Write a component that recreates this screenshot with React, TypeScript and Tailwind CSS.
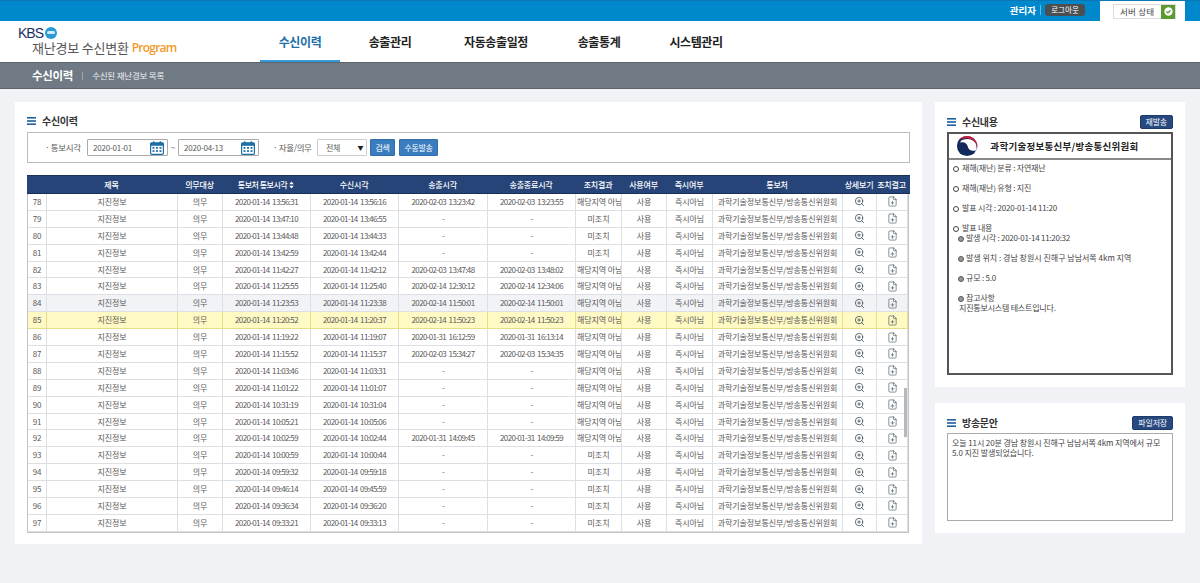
import { FilePlus, ZoomIn } from "lucide-react";

const GRID =
  "grid grid-cols-[19px_131px_45px_88px_88px_89px_88px_46px_45px_46px_130px_34px_31px]";

const NAV = ["수신이력", "송출관리", "자동송출일정", "송출통계", "시스템관리"];

const HEAD = ["", "제목", "의무대상", "통보처 통보시각", "수신시각", "송출시각", "송출종료시각", "조치결과", "사용여부", "즉시여부", "통보처", "상세보기", "조치결고"];

const NA = "해당지역 아님";
const NO = "미조치";

const ROWS: [number, string, string, string, string, string][] = [
  [78, "13:56:31", "13:56:16", "2020-02-03 13:23:42", "2020-02-03 13:23:55", NA],
  [79, "13:47:10", "13:46:55", "-", "-", NO],
  [80, "13:44:48", "13:44:33", "-", "-", NO],
  [81, "13:42:59", "13:42:44", "-", "-", NO],
  [82, "11:42:27", "11:42:12", "2020-02-03 13:47:48", "2020-02-03 13:48:02", NA],
  [83, "11:25:55", "11:25:40", "2020-02-14 12:30:12", "2020-02-14 12:34:06", NA],
  [84, "11:23:53", "11:23:38", "2020-02-14 11:50:01", "2020-02-14 11:50:01", NA],
  [85, "11:20:52", "11:20:37", "2020-02-14 11:50:23", "2020-02-14 11:50:23", NA],
  [86, "11:19:22", "11:19:07", "2020-01-31 16:12:59", "2020-01-31 16:13:14", NA],
  [87, "11:15:52", "11:15:37", "2020-02-03 15:34:27", "2020-02-03 15:34:35", NA],
  [88, "11:03:46", "11:03:31", "-", "-", NA],
  [89, "11:01:22", "11:01:07", "-", "-", NA],
  [90, "10:31:19", "10:31:04", "-", "-", NA],
  [91, "10:05:21", "10:05:06", "-", "-", NA],
  [92, "10:02:59", "10:02:44", "2020-01-31 14:09:45", "2020-01-31 14:09:59", NA],
  [93, "10:00:59", "10:00:44", "-", "-", NO],
  [94, "09:59:32", "09:59:18", "-", "-", NO],
  [95, "09:46:14", "09:45:59", "-", "-", NO],
  [96, "09:36:34", "09:36:20", "-", "-", NO],
  [97, "09:33:21", "09:33:13", "-", "-", NO],
];

const MenuIcon = () => (
  <svg width="9" height="8" viewBox="0 0 9 8" className="shrink-0">
    <rect y="0" width="9" height="1.6" fill="#1f5f9e" />
    <rect y="3.2" width="9" height="1.6" fill="#1f5f9e" />
    <rect y="6.4" width="9" height="1.6" fill="#1f5f9e" />
  </svg>
);

const CalendarIcon = () => (
  <svg width="14" height="14" viewBox="0 0 14 14" className="shrink-0">
    <rect x="0.6" y="1.8" width="12.8" height="11.6" rx="1.2" fill="#fff" stroke="#1c6ea4" strokeWidth="1.2" />
    <rect x="0.6" y="1.8" width="12.8" height="3" fill="#1c6ea4" />
    <rect x="3" y="0.3" width="1.4" height="2.6" fill="#1c6ea4" />
    <rect x="9.6" y="0.3" width="1.4" height="2.6" fill="#1c6ea4" />
    <g fill="#1c6ea4">
      <rect x="2.5" y="6" width="2" height="1.7" />
      <rect x="6" y="6" width="2" height="1.7" />
      <rect x="9.5" y="6" width="2" height="1.7" />
      <rect x="2.5" y="9.2" width="2" height="1.7" />
      <rect x="6" y="9.2" width="2" height="1.7" />
      <rect x="9.5" y="9.2" width="2" height="1.7" />
    </g>
  </svg>
);

const SortIcon = () => (
  <svg width="5" height="8" viewBox="0 0 5 8" className="inline-block ml-[2px]">
    <path d="M2.5 0.5 L4.8 3.2 H0.2 Z M2.5 7.5 L4.8 4.8 H0.2 Z" fill="#fff" />
  </svg>
);

const Taeguk = () => (
  <svg width="22" height="22" viewBox="0 0 24 24" className="shrink-0">
    <circle cx="12" cy="12" r="11" fill="#13295c" />
    <path d="M5 6.5 C10 3, 18 3.5, 21.5 9 C22.5 12, 22.5 14, 22 16.5 C18 18.5, 13.5 16.5, 12.8 12.5 C12 9, 8.5 7, 5 8.5 Z" fill="#fff" />
    <path d="M2.5 6 A11.5 11.5 0 0 1 23.3 14.5 C23 9, 18 3.6, 11 3.6 C7.5 3.6, 4.5 4.5, 2.5 6 Z" fill="#c8203c" />
  </svg>
);

const Bullet = ({ sub }: { sub?: boolean }) =>
  sub ? (
    <span className="inline-block w-[6px] h-[6px] rounded-full border border-[#555] bg-[#999] mr-[2px] align-[-1px]" />
  ) : (
    <span className="inline-block w-[6px] h-[6px] rounded-full border border-[#444] bg-white mr-[3px] align-[-1px]" />
  );

const SectionTitle = ({ title, action }: { title: string; action?: string }) => (
  <div className="flex items-center justify-between h-[14px]">
    <div className="flex items-center gap-[6px]">
      <MenuIcon />
      <span className="text-[10px] font-bold text-[#333] tracking-[-0.3px] pb-[2px]">{title}</span>
    </div>
    {action && (
      <button className="h-[14px] px-[5px] rounded-[2px] bg-[#27497f] border border-[#1d3a6a] text-[8px] text-white leading-none tracking-[-0.2px]">
        {action}
      </button>
    )}
  </div>
);

const App = () => {
  return (
    <div className="w-[1200px] h-[583px] overflow-hidden bg-[#f0f2f6] font-['Noto_Sans_CJK_KR','Noto_Sans',sans-serif] text-[#5a5a5a]">
      {/* top bar */}
      <div className="h-[21px] bg-[#0088cc] border-t border-[#0b78b5] flex justify-end items-start pr-[15px]">
        <div className="flex items-center h-[20px] pb-[2px] mr-[15px]">
          <span className="text-[9.5px] font-bold text-white">관리자</span>
          <span className="w-px h-[10px] bg-[#66b8e0] mx-[4px]" />
          <button className="h-[12px] w-[40px] rounded-[3px] bg-[#4b4f52] text-[7.5px] text-white leading-none">로그아웃</button>
        </div>
        <div className="w-[85px] h-[20px] bg-white flex items-start pl-[13px] pt-[3px]">
          <div className="w-[63px] h-[15px] border border-[#ddd] flex items-center justify-between pl-[6px]">
            <span className="text-[8.5px] text-[#444] tracking-[0.2px]">서버 상태</span>
            <span className="w-[14px] h-[14px] bg-[#5a9a2e] flex items-center justify-center">
              <svg width="9" height="9" viewBox="0 0 10 10">
                <circle cx="5" cy="5" r="4.6" fill="#fff" />
                <path d="M2.8 5 L4.4 6.6 L7.2 3.6" fill="none" stroke="#5a9a2e" strokeWidth="1.4" />
              </svg>
            </span>
          </div>
        </div>
      </div>

      {/* header */}
      <div className="h-[41px] bg-white flex">
        <div className="w-[260px] pl-[18px] pt-[5px] shrink-0">
          <div className="flex items-center h-[13px]">
            <span className="font-['Liberation_Sans',sans-serif] text-[14px] text-[#1d2f5f] tracking-[-1px] leading-none">KBS</span>
            <span className="w-[12px] h-[12px] rounded-full bg-[#2a9ad6] ml-[2px] flex items-center justify-center">
              <span className="w-[8px] h-[3px] rounded-full bg-white/80" />
            </span>
          </div>
          <div className="pl-[14px] flex items-center h-[17px] whitespace-nowrap">
            <span className="text-[13px] text-[#555] tracking-[-0.2px]">재난경보 수신변환</span>
            <span className="ml-[3px] text-[12px] font-semibold text-[#f39a2a] font-['Open_Sans',sans-serif] tracking-[-0.8px]">Program</span>
          </div>
        </div>
        <nav className="flex h-full">
          {NAV.map((n, i) => (
            <div
              key={n}
              className={
                "flex items-center justify-center h-full text-[12px] font-bold tracking-[-0.4px] pt-[2px] " +
                (i === 0 ? "w-[80px] text-[#1b6ea8] border-b-[2px] border-[#3a9ad9]" : "text-[#222] border-b-[2px] border-transparent") +
                (i === 1 ? " w-[100px]" : "") +
                (i === 2 ? " w-[112px]" : "") +
                (i === 3 ? " w-[52px] mx-[21px]" : "") +
                (i === 4 ? " w-[62px] ml-[19px]" : "")
              }
            >
              {n}
            </div>
          ))}
        </nav>
      </div>

      {/* sub bar */}
      <div className="h-[27px] bg-[#6f7a84] border-y border-[#5c656d] flex items-center pl-[32px]">
        <span className="text-[11.5px] font-bold text-white tracking-[-0.3px]">수신이력</span>
        <span className="w-px h-[8px] bg-[#9aa3ab] mx-[9px]" />
        <span className="text-[8.5px] text-[#eef0f2] tracking-[-0.2px]">수신된 재난경보 목록</span>
      </div>

      {/* main */}
      <div className="flex gap-[13px] pl-[15px] pt-[13px]">
        <section className="w-[907px] h-[442px] bg-white px-[12px] pt-[12px]">
          <SectionTitle title="수신이력" />
          <div className="h-[31px] mt-[4px] border border-[#bbb] flex items-center pl-[17px] text-[8.5px] text-[#5a5a5a] tracking-[-0.4px]">
            <span className="w-[42px]">· 통보시각</span>
            <div className="w-[81px] h-[17px] border border-[#aaa] rounded-[1px] flex items-center justify-between pl-[5px] pr-[3px] text-[8px] tracking-[-0.2px]">
              2020-01-01
              <CalendarIcon />
            </div>
            <span className="w-[10px] text-center">~</span>
            <div className="w-[81px] h-[17px] border border-[#aaa] rounded-[1px] flex items-center justify-between pl-[5px] pr-[3px] text-[8px] tracking-[-0.2px]">
              2020-04-13
              <CalendarIcon />
            </div>
            <span className="w-[44px] ml-[14px] whitespace-nowrap">· 자율/의무</span>
            <div className="w-[50px] h-[17px] border border-[#ccc] rounded-[1px] flex items-center justify-between pl-[8px] pr-[3px] text-[8px]">
              전체
              <span className="text-[6px] text-[#222]">▼</span>
            </div>
            <button className="w-[25px] h-[17px] ml-[3px] rounded-[1px] bg-[#3a7dbf] border border-[#2f6ea8] text-[8px] text-white">검색</button>
            <button className="w-[39px] h-[17px] ml-[4px] rounded-[1px] bg-[#3a7dbf] border border-[#2f6ea8] text-[8px] text-white">수동발송</button>
          </div>

          <div className="relative mt-[12px]">
            <div className={GRID + " h-[19px] w-[883px] bg-[#264478] border-y border-[#182f58] text-[8px] text-white font-medium tracking-[-0.2px]"}>
              {HEAD.map((h, i) => (
                <div key={i} className={"flex items-center justify-center whitespace-nowrap overflow-hidden " + (i === 3 ? "tracking-[-0.5px]" : "")}>
                  {h}
                  {i === 3 && <SortIcon />}
                </div>
              ))}
            </div>
            <div className="w-[882px] border-x border-b border-[#c4c4c4]">
              {ROWS.map((r) => {
                const bg =
                  r[0] === 85
                    ? "bg-[#fff9c4] border-[#e6dd8a]"
                    : r[0] === 84
                      ? "bg-[#f1f3f7] border-[#dcdfe4]"
                      : "bg-white border-[#dcdfe4]";
                const cells = [
                  String(r[0]),
                  "지진정보",
                  "의무",
                  "2020-01-14 " + r[1],
                  "2020-01-14 " + r[2],
                  r[3],
                  r[4],
                  r[5],
                  "사용",
                  "즉시아님",
                  "과학기술정보통신부/방송통신위원회",
                ];
                return (
                  <div key={r[0]} className={GRID + " h-[16.9px] border-b text-[8px] leading-none tracking-[-0.08px] " + bg}>
                    {cells.map((c, i) => (
                      <div
                        key={i}
                        className={
                          "flex items-center overflow-hidden whitespace-nowrap border-r border-inherit " +
                          (c === NA ? "justify-start pl-[1px] " : "justify-center ") +
                          (i >= 3 && i <= 6 ? "tracking-[-0.66px] [word-spacing:1.4px]" : "")
                        }
                      >
                        {c}
                      </div>
                    ))}
                    <div className="flex items-center justify-center border-r border-inherit">
                      <ZoomIn size={11} strokeWidth={1.7} className="text-[#3a4a55]" />
                    </div>
                    <div className="flex items-center justify-center border-r border-inherit">
                      <FilePlus size={11} strokeWidth={1.3} className="text-[#3a4a55]" />
                    </div>
                  </div>
                );
              })}
            </div>
            <div className="absolute left-[877px] top-[213px] w-[3px] h-[49px] bg-[#b5b8bc]" />
          </div>
        </section>

        <div className="w-[250px] flex flex-col gap-[16px]">
          <section className="h-[285px] bg-white px-[12px] pt-[13px]">
            <SectionTitle title="수신내용" action="재발송" />
            <div className="h-[243px] mt-[3px] border-2 border-[#555] flex flex-col">
              <div className="h-[26px] shrink-0 border-b-2 border-[#888] flex items-center pl-[7px]">
                <Taeguk />
                <span className="flex-1 text-center pr-[20px] text-[9.5px] font-bold text-[#222] tracking-[0.28px] whitespace-nowrap">
                  과학기술정보통신부/방송통신위원회
                </span>
              </div>
              <div className="pl-[4px] pt-[3px] text-[8px] leading-[10px] text-[#444] tracking-[-0.2px]">
                <p className="mb-[10px]"><Bullet />재해(재난) 분류 : 자연재난</p>
                <p className="mb-[10px]"><Bullet />재해(재난) 유형 : 지진</p>
                <p className="mb-[10px]"><Bullet />발표 시각 : 2020-01-14 11:20</p>
                <p><Bullet />발표 내용</p>
                <div className="pl-[5px]">
                  <p className="mb-[10px] tracking-[-0.26px]"><Bullet sub />발생 시각 : 2020-01-14 11:20:32</p>
                  <p className="mb-[10px] tracking-[0px]"><Bullet sub />발생 위치 : 경남 창원시 진해구 남남서쪽 4km 지역</p>
                  <p className="mb-[10px]"><Bullet sub />규모 : 5.0</p>
                  <p><Bullet sub />참고사항</p>
                  <p className="pl-[1px]">지진통보시스템 테스트입니다.</p>
                </div>
              </div>
            </div>
          </section>

          <section className="h-[130px] bg-white px-[12px] pt-[13px]">
            <SectionTitle title="방송문안" action="파일저장" />
            <div className="h-[88px] mt-[3px] border border-[#aaa] px-[4px] py-[4px] text-[8px] leading-[10px] text-[#444] tracking-[-0.1px]">
              오늘 11시 20분 경남 창원시 진해구 남남서쪽 4km 지역에서 규모 5.0 지진 발생되었습니다.
            </div>
          </section>
        </div>
      </div>
    </div>
  );
};

export default App;
